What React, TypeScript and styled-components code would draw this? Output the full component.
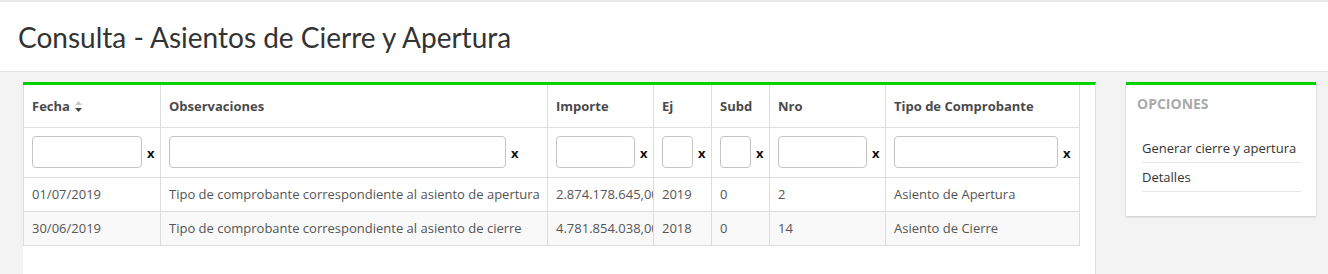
import * as React from "react";
import styled, { createGlobalStyle } from "styled-components";

const GlobalStyle = createGlobalStyle`
  html, body {
    margin: 0;
    padding: 0;
    background: #f3f3f3;
  }
  * {
    box-sizing: border-box;
  }
`;

const PageHeader = styled.header`
  background: #fff;
  border-top: 2px solid #e8e8e8;
  border-bottom: 1px solid #e2e2e2;
  height: 72px;
  padding: 17px 18px 0;
`;

const Title = styled.h1`
  margin: 0;
  font-family: Lato, "Open Sans", sans-serif;
  font-weight: 400;
  font-size: 28px;
  line-height: 36px;
  color: #333;
`;

const Content = styled.div`
  display: flex;
  align-items: flex-start;
  gap: 30px;
  padding: 10px 0 0 23px;
`;

const Card = styled.section`
  width: 1073px;
  height: 200px;
  background: #fff;
  border-top: 3px solid #00d100;
  border-right: 1px solid #dedede;
`;

const Table = styled.table`
  table-layout: fixed;
  border-collapse: collapse;
  width: 1056px;
  font-family: "Open Sans", sans-serif;
  font-size: 13px;
  color: #555;
`;

const Th = styled.th`
  height: 42px;
  padding: 0 8px;
  text-align: left;
  font-weight: 700;
  color: #4a4a4a;
  border: 1px solid #dddddd;
  border-top: 0;
  white-space: nowrap;
`;

const FilterCell = styled.td`
  height: 50px;
  padding: 0 8px;
  border: 1px solid #dddddd;
`;

const FilterBox = styled.div`
  display: flex;
  align-items: center;
  gap: 5px;
`;

const FilterInput = styled.input<{ $w: number }>`
  width: ${(p) => p.$w}px;
  height: 32px;
  border: 1px solid #c4c4c4;
  border-radius: 4px;
  padding: 0 6px;
  font: inherit;
  background: #fff;
`;

const Clear = styled.span`
  font-family: "Open Sans", sans-serif;
  font-weight: 700;
  font-size: 13px;
  color: #111;
  padding-top: 1px;
`;

const Row = styled.tr<{ $striped?: boolean }>`
  background: ${(p) => (p.$striped ? "#f9f9f9" : "#fff")};
`;

const Td = styled.td`
  height: 34px;
  padding: 0 8px;
  border: 1px solid #dddddd;
  white-space: nowrap;
  overflow: hidden;
`;

const SortIcon = styled.svg`
  margin-left: 5px;
  vertical-align: -1px;
`;

const Side = styled.aside`
  width: 190px;
  background: #fff;
  border-top: 3px solid #00d100;
  box-shadow: 0 1px 2px rgba(0, 0, 0, 0.18);
  padding: 9px 15px 24px 11px;
  font-family: "Open Sans", sans-serif;
`;

const SideTitle = styled.h3`
  margin: 0 0 20px;
  font-size: 14px;
  font-weight: 700;
  color: #aaa;
  line-height: 20px;
`;

const Options = styled.ul`
  list-style: none;
  margin: 0;
  padding: 0 0 0 5px;
`;

const Option = styled.li`
  font-size: 13px;
  color: #333;
  line-height: 28px;
  border-bottom: 1px solid #e8e8e8;
`;

const columns = [
  { name: "Fecha", width: 137, input: 110, sort: true },
  { name: "Observaciones", width: 387, input: 337 },
  { name: "Importe", width: 106, input: 79 },
  { name: "Ej", width: 58, input: 31 },
  { name: "Subd", width: 58, input: 31 },
  { name: "Nro", width: 116, input: 89 },
  { name: "Tipo de Comprobante", width: 194, input: 164 },
];

const rows = [
  ["01/07/2019", "Tipo de comprobante correspondiente al asiento de apertura", "2.874.178.645,00", "2019", "0", "2", "Asiento de Apertura"],
  ["30/06/2019", "Tipo de comprobante correspondiente al asiento de cierre", "4.781.854.038,00", "2018", "0", "14", "Asiento de Cierre"],
];

export default function App() {
  return (
    <>
      <GlobalStyle />
      <PageHeader>
        <Title>Consulta - Asientos de Cierre y Apertura</Title>
      </PageHeader>
      <Content>
        <Card>
          <Table>
            <colgroup>
              {columns.map((c) => (
                <col key={c.name} style={{ width: c.width }} />
              ))}
            </colgroup>
            <thead>
              <tr>
                {columns.map((c) => (
                  <Th key={c.name}>
                    {c.name}
                    {c.sort && (
                      <SortIcon width="7" height="11" viewBox="0 0 7 11">
                        <path d="M3.5 0 L7 4 H0 Z" fill="#c8c8c8" />
                        <path d="M0 7 H7 L3.5 11 Z" fill="#444" />
                      </SortIcon>
                    )}
                  </Th>
                ))}
              </tr>
              <tr>
                {columns.map((c) => (
                  <FilterCell key={c.name}>
                    <FilterBox>
                      <FilterInput $w={c.input} />
                      <Clear>x</Clear>
                    </FilterBox>
                  </FilterCell>
                ))}
              </tr>
            </thead>
            <tbody>
              {rows.map((r, i) => (
                <Row key={i} $striped={i % 2 === 1}>
                  {r.map((v, j) => (
                    <Td key={j}>{v}</Td>
                  ))}
                </Row>
              ))}
            </tbody>
          </Table>
        </Card>
        <Side>
          <SideTitle>OPCIONES</SideTitle>
          <Options>
            <Option>Generar cierre y apertura</Option>
            <Option>Detalles</Option>
          </Options>
        </Side>
      </Content>
    </>
  );
}
